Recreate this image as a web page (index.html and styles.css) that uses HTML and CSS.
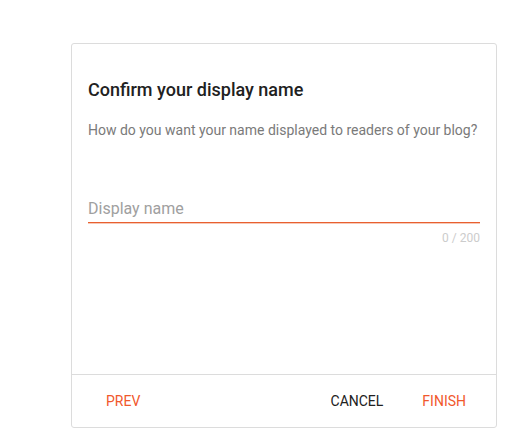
FILE: index.html
```html
<!DOCTYPE html>
<html>
<head>
<meta charset="utf-8">
<link rel="stylesheet" href="styles.css">
</head>
<body>
<div class="page">
  <div class="card">
    <div class="content">
      <h1 class="title">Confirm your display name</h1>
      <p class="subtitle">How do you want your name displayed to readers of your blog?</p>
      <div class="field">
        <div class="input">Display name</div>
        <div class="counter">0 / 200</div>
      </div>
    </div>
    <div class="footer">
      <button class="btn accent">PREV</button>
      <div class="spacer"></div>
      <button class="btn dark">CANCEL</button>
      <button class="btn accent">FINISH</button>
    </div>
  </div>
</div>
</body>
</html>
```
FILE: styles.css
```css
html, body {
  margin: 0;
  padding: 0;
  background: #ffffff;
  font-family: Roboto, "Liberation Sans", Arial, sans-serif;
}
.page {
  padding: 43px 0 0 71px;
}
.card {
  width: 424px;
  height: 383px;
  border: 1px solid #dcdcdc;
  border-radius: 3px;
  display: flex;
  flex-direction: column;
  background: #fff;
}
.content {
  flex: 1;
  padding: 34px 16px 0 16px;
}
.title {
  margin: 0;
  font-size: 18px;
  font-weight: 500;
  color: #212121;
  line-height: 24px;
}
.subtitle {
  margin: 18px 0 0 0;
  font-size: 14px;
  color: #7a7a7a;
  line-height: 20px;
}
.field {
  margin-top: 57px;
}
.input {
  font-size: 16px;
  line-height: 24px;
  color: #a0a0a0;
  padding-bottom: 1px;
  border-bottom: 1px solid #e8602f;
  box-shadow: 0 1px 0 rgba(232, 96, 47, 0.35);
}
.counter {
  text-align: right;
  font-size: 12px;
  color: #cccccc;
  margin-top: 7px;
  line-height: 16px;
}
.footer {
  height: 52px;
  border-top: 1px solid #dcdcdc;
  display: flex;
  align-items: center;
  padding: 0 14px 0 18px;
}
.spacer {
  flex: 1;
}
.btn {
  background: none;
  border: none;
  font-family: Roboto, "Liberation Sans", Arial, sans-serif;
  font-size: 14px;
  font-weight: 400;
  padding: 0 16px;
  height: 36px;
  cursor: pointer;
}
.btn + .btn {
  margin-left: 7px;
}
.accent {
  color: #f1582c;
}
.dark {
  color: #212121;
}
```
